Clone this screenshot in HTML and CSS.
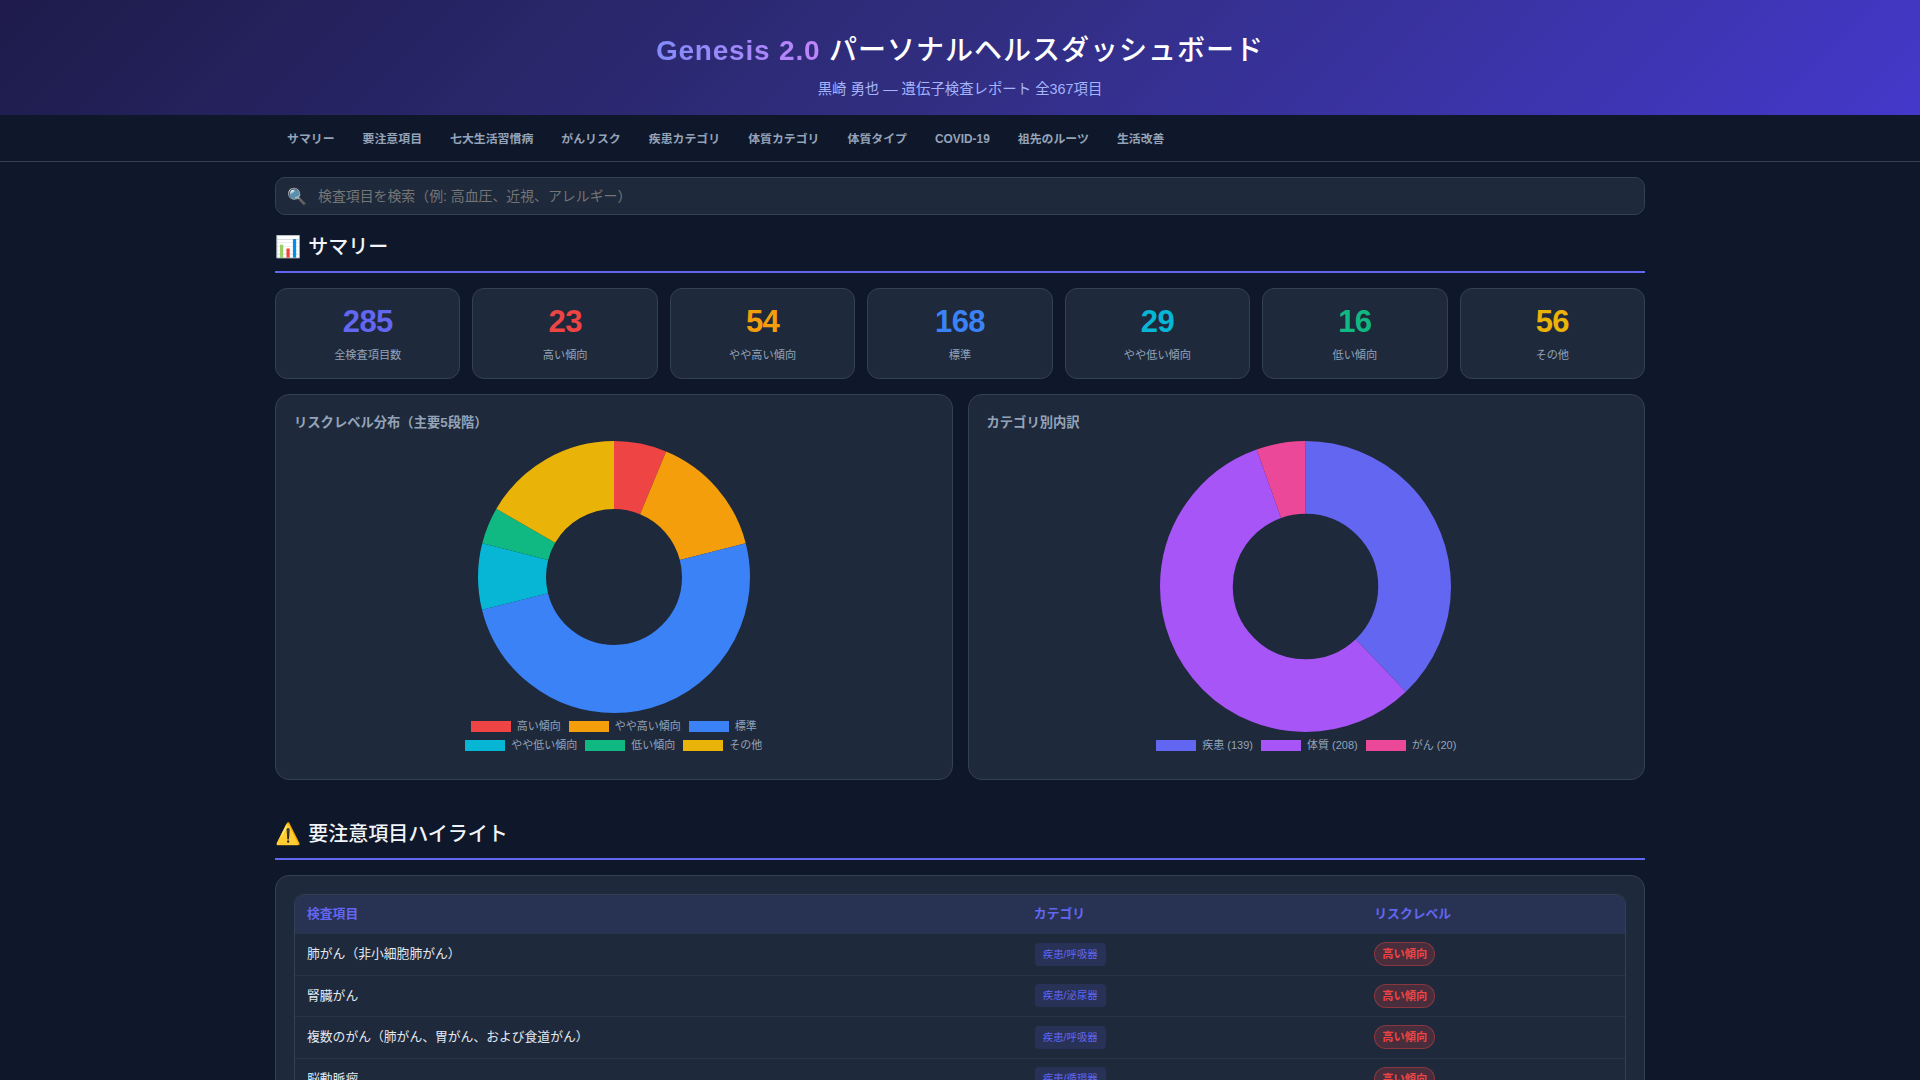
FILE: index.html
```html
<!DOCTYPE html>
<html lang="ja">
<head>
<meta charset="utf-8">
<title>Genesis 2.0 パーソナルヘルスダッシュボード</title>
<link rel="stylesheet" href="styles.css">
</head>
<body>
<header class="hero">
  <h1 class="hero-title"><span class="brand">Genesis 2.0</span> パーソナルヘルスダッシュボード</h1>
  <p class="hero-sub">黒崎 勇也 — 遺伝子検査レポート 全367項目</p>
</header>
<nav class="nav">
  <div class="nav-inner">
    <a class="nav-item">サマリー</a><a class="nav-item">要注意項目</a><a class="nav-item">七大生活習慣病</a><a class="nav-item">がんリスク</a><a class="nav-item">疾患カテゴリ</a><a class="nav-item">体質カテゴリ</a><a class="nav-item">体質タイプ</a><a class="nav-item">COVID-19</a><a class="nav-item">祖先のルーツ</a><a class="nav-item">生活改善</a>
  </div>
</nav>
<main class="container">
  <div class="search">
    <span class="search-icon">🔍</span>
    <input class="search-input" type="text" placeholder="検査項目を検索（例: 高血圧、近視、アレルギー）">
  </div>
  <section class="section">
    <h2 class="section-title"><span class="emoji">📊</span>サマリー</h2>
    <div class="stats">
      <div class="stat"><div class="num c-indigo">285</div><div class="lbl">全検査項目数</div></div>
      <div class="stat"><div class="num c-red">23</div><div class="lbl">高い傾向</div></div>
      <div class="stat"><div class="num c-orange">54</div><div class="lbl">やや高い傾向</div></div>
      <div class="stat"><div class="num c-blue">168</div><div class="lbl">標準</div></div>
      <div class="stat"><div class="num c-cyan">29</div><div class="lbl">やや低い傾向</div></div>
      <div class="stat"><div class="num c-green">16</div><div class="lbl">低い傾向</div></div>
      <div class="stat"><div class="num c-yellow">56</div><div class="lbl">その他</div></div>
    </div>
    <div class="charts">
      <div class="card chart-card">
        <h3 class="chart-title">リスクレベル分布（主要5段階）</h3>
        <svg class="donut" width="272" height="272" viewBox="0 0 272 272">
          <g fill="none" stroke-width="68" transform="rotate(-90 136 136)">
            <circle cx="136" cy="136" r="102" pathLength="367" stroke="#ef4444" stroke-dasharray="23 344" stroke-dashoffset="0"/>
            <circle cx="136" cy="136" r="102" pathLength="367" stroke="#f59e0b" stroke-dasharray="54 313" stroke-dashoffset="-23"/>
            <circle cx="136" cy="136" r="102" pathLength="367" stroke="#3b82f6" stroke-dasharray="184 183" stroke-dashoffset="-77"/>
            <circle cx="136" cy="136" r="102" pathLength="367" stroke="#06b6d4" stroke-dasharray="29 338" stroke-dashoffset="-261"/>
            <circle cx="136" cy="136" r="102" pathLength="367" stroke="#10b981" stroke-dasharray="16 351" stroke-dashoffset="-290"/>
            <circle cx="136" cy="136" r="102" pathLength="367" stroke="#eab308" stroke-dasharray="61 306" stroke-dashoffset="-306"/>
          </g>
        </svg>
        <div class="legend">
          <div class="legend-row">
            <span class="key"><i class="sw bg-red"></i>高い傾向</span>
            <span class="key"><i class="sw bg-orange"></i>やや高い傾向</span>
            <span class="key"><i class="sw bg-blue"></i>標準</span>
          </div>
          <div class="legend-row">
            <span class="key"><i class="sw bg-cyan"></i>やや低い傾向</span>
            <span class="key"><i class="sw bg-green"></i>低い傾向</span>
            <span class="key"><i class="sw bg-yellow"></i>その他</span>
          </div>
        </div>
      </div>
      <div class="card chart-card">
        <h3 class="chart-title">カテゴリ別内訳</h3>
        <svg class="donut donut-right" width="291" height="291" viewBox="0 0 291 291">
          <g fill="none" stroke-width="72.75" transform="rotate(-90 145.5 145.5)">
            <circle cx="145.5" cy="145.5" r="109.125" pathLength="367" stroke="#6366f1" stroke-dasharray="139 228" stroke-dashoffset="0"/>
            <circle cx="145.5" cy="145.5" r="109.125" pathLength="367" stroke="#a855f7" stroke-dasharray="208 159" stroke-dashoffset="-139"/>
            <circle cx="145.5" cy="145.5" r="109.125" pathLength="367" stroke="#ec4899" stroke-dasharray="20 347" stroke-dashoffset="-347"/>
          </g>
        </svg>
        <div class="legend">
          <div class="legend-row">
            <span class="key"><i class="sw bg-indigo"></i>疾患 (139)</span>
            <span class="key"><i class="sw bg-purple"></i>体質 (208)</span>
            <span class="key"><i class="sw bg-pink"></i>がん (20)</span>
          </div>
        </div>
      </div>
    </div>
  </section>
  <section class="section section-next">
    <h2 class="section-title"><span class="emoji">⚠️</span>要注意項目ハイライト</h2>
    <div class="card table-card">
      <table class="table">
        <thead>
          <tr><th class="col-a">検査項目</th><th class="col-b">カテゴリ</th><th class="col-c">リスクレベル</th></tr>
        </thead>
        <tbody>
          <tr><td>肺がん（非小細胞肺がん）</td><td><span class="tag">疾患/呼吸器</span></td><td><span class="risk">高い傾向</span></td></tr>
          <tr><td>腎臓がん</td><td><span class="tag">疾患/泌尿器</span></td><td><span class="risk">高い傾向</span></td></tr>
          <tr><td>複数のがん（肺がん、胃がん、および食道がん）</td><td><span class="tag">疾患/呼吸器</span></td><td><span class="risk">高い傾向</span></td></tr>
          <tr><td>脳動脈瘤</td><td><span class="tag">疾患/循環器</span></td><td><span class="risk">高い傾向</span></td></tr>
        </tbody>
      </table>
    </div>
  </section>
</main>
</body>
</html>
```
FILE: styles.css
```css
* { box-sizing: border-box; }
html, body { margin: 0; padding: 0; }
body {
  background: #0f172a;
  color: #e2e8f0;
  font-family: "Liberation Sans", "Noto Sans CJK JP", sans-serif;
  line-height: 1.6;
  height: 1080px;
  overflow: hidden;
}
.hero {
  height: 115px;
  padding: 31px 32px 0;
  text-align: center;
  background: linear-gradient(135deg, #1e1b4b 0%, #312e81 50%, #4338ca 100%);
}
.hero-title {
  margin: 0;
  font-size: 28px;
  line-height: 40px;
  font-weight: 500;
  color: #fff;
  letter-spacing: 1px;
}
.brand {
  font-weight: 700;
  letter-spacing: 0.8px;
  background: linear-gradient(90deg, #818cf8, #c084fc);
  -webkit-background-clip: text;
  background-clip: text;
  color: transparent;
}
.hero-sub {
  margin: 7px 0 0;
  font-size: 14.4px;
  line-height: 23px;
  color: #a5b4fc;
}
.nav {
  height: 47px;
  background: #0f172a;
  border-bottom: 1px solid #334155;
}
.nav-inner {
  width: 1370px;
  margin: 0 auto;
  display: flex;
  gap: 4px;
}
.nav-item {
  padding: 13px 12px 11px;
  font-size: 11.9px;
  line-height: 22px;
  font-weight: 600;
  color: #94a3b8;
}
.container { width: 1370px; margin: 0 auto; }
.search { position: relative; margin-top: 15px; }
.search-icon {
  position: absolute;
  left: 12px;
  top: 10px;
  font-size: 16px;
  line-height: 20px;
}
.search-input {
  display: block;
  width: 100%;
  height: 38px;
  padding: 0 16px 0 42px;
  background: #1e293b;
  border: 1px solid #334155;
  border-radius: 10px;
  color: #e2e8f0;
  font: 13.9px "Liberation Sans", "Noto Sans CJK JP", sans-serif;
}
.search-input::placeholder { color: #757575; opacity: 1; }
.section-title {
  margin: 16px 0 15px;
  padding-bottom: 8px;
  display: flex;
  align-items: center;
  gap: 7px;
  font-size: 20px;
  line-height: 32px;
  height: 42px;
  font-weight: 500;
  color: #f1f5f9;
  border-bottom: 2px solid #6366f1;
}
.emoji { font-family: "Noto Color Emoji", sans-serif; font-size: 21px; }
.stats {
  display: grid;
  grid-template-columns: repeat(7, 1fr);
  gap: 12px;
}
.stat {
  height: 91px;
  padding: 13px 8px 0;
  text-align: center;
  background: #1e293b;
  border: 1px solid #334155;
  border-radius: 12px;
}
.num { font-size: 31px; line-height: 40px; font-weight: 700; letter-spacing: -0.6px; }
.lbl { margin-top: 4px; font-size: 11.2px; line-height: 19px; color: #94a3b8; }
.c-indigo { color: #6366f1; }
.c-red { color: #ef4444; }
.c-orange { color: #f59e0b; }
.c-blue { color: #3b82f6; }
.c-cyan { color: #06b6d4; }
.c-green { color: #10b981; }
.c-yellow { color: #eab308; }
.card {
  background: #1e293b;
  border: 1px solid #334155;
  border-radius: 14px;
}
.charts {
  display: grid;
  grid-template-columns: 1fr 1fr;
  gap: 15px;
  margin-top: 15px;
}
.chart-card {
  height: 386px;
  padding: 17px 18px;
  display: flex;
  flex-direction: column;
}
.chart-title {
  margin: 0;
  font-size: 13.3px;
  line-height: 22px;
  font-weight: 600;
  color: #94a3b8;
}
.donut { display: block; align-self: center; margin-top: 7px; flex: none; }
.donut-right { margin-right: 1px; }
.legend { display: flex; flex-direction: column; align-items: center; margin-top: 4px; }
.legend-row { display: flex; gap: 8px; height: 19px; }
.key {
  display: flex;
  align-items: center;
  font-size: 11px;
  line-height: 19px;
  color: #94a3b8;
}
.sw { display: block; width: 40px; height: 11px; margin-right: 6px; }
.bg-red { background: #ef4444; }
.bg-orange { background: #f59e0b; }
.bg-blue { background: #3b82f6; }
.bg-cyan { background: #06b6d4; }
.bg-green { background: #10b981; }
.bg-yellow { background: #eab308; }
.bg-indigo { background: #6366f1; }
.bg-purple { background: #a855f7; }
.bg-pink { background: #ec4899; }
.section-next { margin-top: 38px; }
.table-card { padding: 18px; }
.table {
  width: 100%;
  border-collapse: separate;
  border-spacing: 0;
  table-layout: fixed;
  border: 1px solid #334155;
  border-radius: 10px;
  font-size: 12.8px;
}
.table th {
  height: 38px;
  padding: 0 12px;
  text-align: left;
  font-size: 12.8px;
  font-weight: 600;
  color: #6366f1;
  background: #283354;
}
.col-a { width: 54.65%; }
.col-b { width: 25.6%; }
.table th:first-child { border-top-left-radius: 9px; }
.table th:last-child { border-top-right-radius: 9px; }
.table td {
  height: 41.5px;
  padding: 0 12px;
  color: #e2e8f0;
  border-top: 1px solid #283548;
}
.tag {
  display: inline-block;
  margin-left: 1px;
  padding: 3px 8px;
  border-radius: 4px;
  background: rgba(99, 102, 241, 0.15);
  color: #6366f1;
  font-size: 10.4px;
  line-height: 17px;
  vertical-align: middle;
}
.risk {
  display: inline-block;
  padding: 2px 7px;
  border-radius: 12px;
  background: rgba(239, 68, 68, 0.2);
  border: 1px solid rgba(239, 68, 68, 0.4);
  color: #ef4444;
  font-size: 11.2px;
  line-height: 18px;
  font-weight: 600;
  vertical-align: middle;
}
```
